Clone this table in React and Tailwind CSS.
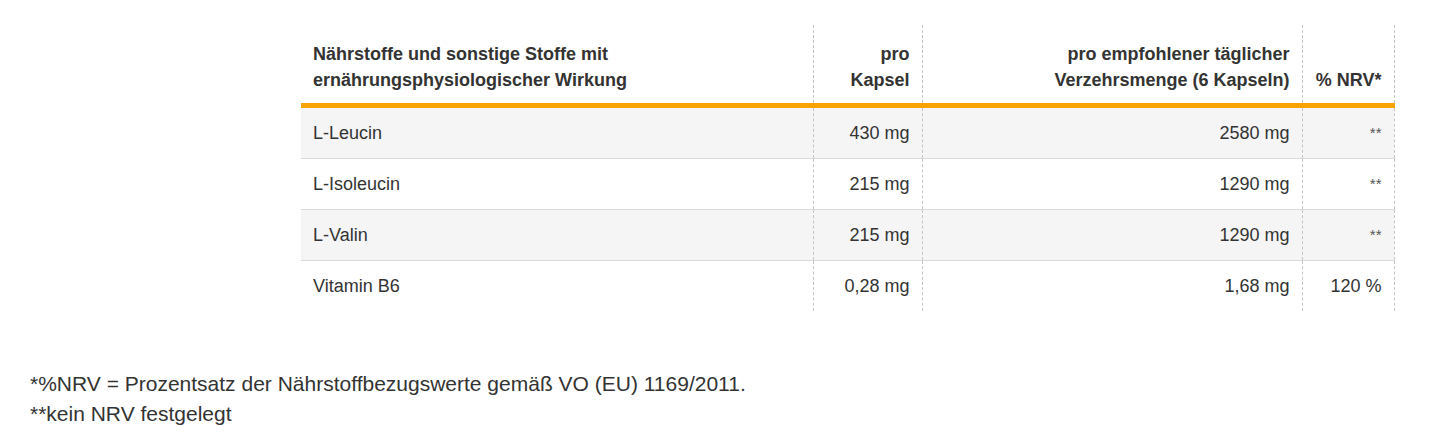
const rows = [
  { name: "L-Leucin", capsule: "430 mg", daily: "2580 mg", nrv: "**", shaded: true },
  { name: "L-Isoleucin", capsule: "215 mg", daily: "1290 mg", nrv: "**", shaded: false },
  { name: "L-Valin", capsule: "215 mg", daily: "1290 mg", nrv: "**", shaded: true },
  { name: "Vitamin B6", capsule: "0,28 mg", daily: "1,68 mg", nrv: "120 %", shaded: false },
];

const App = () => {
  return (
    <div className="min-h-screen bg-white text-[#333] font-['Liberation_Sans',Arial,sans-serif] pt-[25px]">
      <div className="pl-[301px]">
        <table className="w-[1093px] border-collapse table-fixed">
          <colgroup>
            <col className="w-[512px]" />
            <col className="w-[109px]" />
            <col className="w-[380px]" />
            <col className="w-[92px]" />
          </colgroup>
          <thead>
            <tr className="border-b-[5px] border-[#f7a400]">
              <th className="px-3 pt-[16px] pb-[10px] text-left align-bottom text-[18px] leading-[26px] font-bold border-r border-dashed border-r-[#c4c4c4]">
                Nährstoffe und sonstige Stoffe mit
                <br />
                ernährungsphysiologischer Wirkung
              </th>
              <th className="px-3 pt-[16px] pb-[10px] text-right align-bottom text-[18px] leading-[26px] font-bold border-r border-dashed border-r-[#c4c4c4]">
                pro
                <br />
                Kapsel
              </th>
              <th className="px-3 pt-[16px] pb-[10px] text-right align-bottom text-[18px] leading-[26px] font-bold border-r border-dashed border-r-[#c4c4c4]">
                pro empfohlener täglicher
                <br />
                Verzehrsmenge (6 Kapseln)
              </th>
              <th className="px-3 pt-[16px] pb-[10px] text-right align-bottom text-[18px] leading-[26px] font-bold border-r border-dashed border-r-[#c4c4c4]">
                % NRV*
              </th>
            </tr>
          </thead>
          <tbody>
            {rows.map((row, i) => (
              <tr
                key={row.name}
                className={`${row.shaded ? "bg-[#f5f5f5]" : "bg-white"} ${
                  i < rows.length - 1 ? "border-b border-b-[#d9d9d9]" : ""
                }`}
              >
                <td className="px-3 py-3 text-[18px] leading-[26px] border-r border-dashed border-r-[#c4c4c4]">
                  {row.name}
                </td>
                <td className="px-3 py-3 text-right text-[18px] leading-[26px] border-r border-dashed border-r-[#c4c4c4]">
                  {row.capsule}
                </td>
                <td className="px-3 py-3 text-right text-[18px] leading-[26px] border-r border-dashed border-r-[#c4c4c4]">
                  {row.daily}
                </td>
                <td
                  className={`px-3 py-3 text-right leading-[26px] border-r border-dashed border-r-[#c4c4c4] ${
                    row.nrv === "**" ? "text-[15px] text-[#555]" : "text-[18px]"
                  }`}
                >
                  {row.nrv}
                </td>
              </tr>
            ))}
          </tbody>
        </table>
      </div>

      {/* Fußnoten */}
      <div className="pl-[30px] mt-[58px] text-[21px] leading-[30px]">
        <p>*%NRV = Prozentsatz der Nährstoffbezugswerte gemäß VO (EU) 1169/2011.</p>
        <p>**kein NRV festgelegt</p>
      </div>
    </div>
  );
};

export default App;
